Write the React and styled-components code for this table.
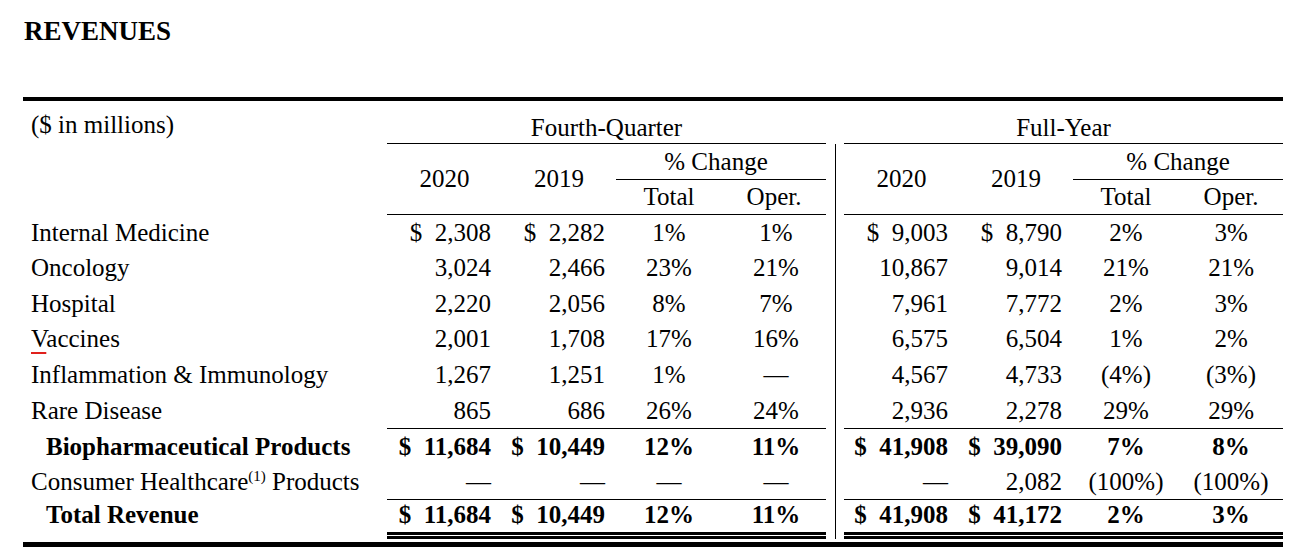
import React from "react";
import styled, { createGlobalStyle } from "styled-components";

const GlobalStyle = createGlobalStyle`
  body {
    margin: 0;
    background: #fff;
    color: #000;
    font-family: "Liberation Serif", "Times New Roman", serif;
  }
`;

const Page = styled.div`
  padding: 17px 29px 0 23px;
`;

const Title = styled.h1`
  margin: 0;
  padding-left: 1px;
  font-size: 27px;
  font-weight: 700;
  line-height: 29px;
`;

const Table = styled.table`
  margin-top: 51px;
  width: 1260px;
  table-layout: fixed;
  border-collapse: separate;
  border-spacing: 0;
  border-top: 4px solid #000;
  border-bottom: 5px solid #000;
  font-size: 25px;
  line-height: 28px;
`;

const Row = styled.tr`
  height: ${(p) => p.$h}px;
`;

const Label = styled.td`
  padding: 0 0 ${(p) => p.$pb || 0}px ${(p) => (p.$bold ? 23 : 8)}px;
  font-weight: ${(p) => (p.$bold ? 700 : 400)};
  vertical-align: ${(p) => p.$valign || "middle"};
  white-space: nowrap;
`;

const GroupHead = styled.th`
  padding: 0 0 1px;
  font-weight: 400;
  text-align: center;
  vertical-align: bottom;
  border-bottom: 1px solid #000;
`;

const Head = styled.th`
  padding: 0 ${(p) => p.$pr || 0}px 0 ${(p) => p.$pl || 0}px;
  font-weight: 400;
  text-align: center;
  vertical-align: middle;
  border-bottom: ${(p) => (p.$rule ? "1px solid #000" : "none")};
`;

const Cell = styled.td`
  padding: 0 ${(p) => (p.$money ? 11 : 0)}px ${(p) => p.$pb || 0}px
    ${(p) => p.$pl || 0}px;
  text-align: ${(p) => (p.$money ? "right" : "center")};
  font-weight: ${(p) => (p.$bold ? 700 : 400)};
  vertical-align: middle;
  white-space: pre;
  border-bottom: ${(p) => (p.$rule ? "1px solid #000" : "none")};
`;

const Gap = styled.td`
  padding: 0;
  background: ${(p) =>
    p.$line ? "linear-gradient(#000, #000) 9px 0 / 1px 100% no-repeat" : "none"};
`;

const DoubleRule = styled.td`
  padding: 0;
  border-top: 3px solid #000;
  border-bottom: 3px solid #000;
`;

const Sup = styled.sup`
  font-size: 15px;
  line-height: 0;
  vertical-align: 9px;
`;

const Squiggle = styled.span`
  text-decoration: underline 2px #e0201c;
  text-underline-offset: 5px;
`;

const rows = [
  { label: "Internal Medicine", h: 35, q: ["$  2,308", "$  2,282", "1%", "1%"], y: ["$  9,003", "$  8,790", "2%", "3%"] },
  { label: "Oncology", h: 36, q: ["3,024", "2,466", "23%", "21%"], y: ["10,867", "9,014", "21%", "21%"] },
  { label: "Hospital", h: 35, q: ["2,220", "2,056", "8%", "7%"], y: ["7,961", "7,772", "2%", "3%"] },
  { label: "Vaccines", h: 36, q: ["2,001", "1,708", "17%", "16%"], y: ["6,575", "6,504", "1%", "2%"] },
  { label: "Inflammation & Immunology", h: 36, q: ["1,267", "1,251", "1%", "—"], y: ["4,567", "4,733", "(4%)", "(3%)"] },
  { label: "Rare Disease", h: 36, rule: true, q: ["865", "686", "26%", "24%"], y: ["2,936", "2,278", "29%", "29%"] },
  { label: "Biopharmaceutical Products", h: 35, bold: true, q: ["$  11,684", "$  10,449", "12%", "11%"], y: ["$  41,908", "$  39,090", "7%", "8%"] },
  { label: "consumer", h: 36, rule: true, q: ["—", "—", "—", "—"], y: ["—", "2,082", "(100%)", "(100%)"] },
  { label: "Total Revenue", h: 32, bold: true, pb: 3, q: ["$  11,684", "$  10,449", "12%", "11%"], y: ["$  41,908", "$  41,172", "2%", "3%"] },
];

const renderLabel = (label) => {
  if (label === "consumer")
    return (
      <>
        Consumer Healthcare<Sup>(1)</Sup> Products
      </>
    );
  if (label === "Vaccines")
    return (
      <>
        <Squiggle>V</Squiggle>accines
      </>
    );
  return label;
};

const Group = ({ values, bold, rule, pb, operPad }) =>
  values.map((v, i) => (
    <Cell
      key={i}
      $money={i < 2}
      $pl={i === 3 ? operPad : 0}
      $pb={pb}
      $bold={bold}
      $rule={rule}
    >
      {v}
    </Cell>
  ));

export default function App() {
  return (
    <>
      <GlobalStyle />
      <Page>
        <Title>REVENUES</Title>
        <Table>
          <colgroup>
            <col style={{ width: 364 }} />
            <col style={{ width: 115 }} />
            <col style={{ width: 114 }} />
            <col style={{ width: 106 }} />
            <col style={{ width: 104 }} />
            <col style={{ width: 18 }} />
            <col style={{ width: 115 }} />
            <col style={{ width: 114 }} />
            <col style={{ width: 106 }} />
            <col style={{ width: 104 }} />
          </colgroup>
          <thead>
            <Row $h={43}>
              <Label $valign="bottom" $pb={5}>($ in millions)</Label>
              <GroupHead colSpan={4}>Fourth-Quarter</GroupHead>
              <Gap />
              <GroupHead colSpan={4}>Full-Year</GroupHead>
            </Row>
            <Row $h={36}>
              <Label />
              <Head rowSpan={2} $rule>2020</Head>
              <Head rowSpan={2} $rule>2019</Head>
              <Head colSpan={2} $rule $pr={10}>% Change</Head>
              <Gap $line />
              <Head rowSpan={2} $rule>2020</Head>
              <Head rowSpan={2} $rule>2019</Head>
              <Head colSpan={2} $rule>% Change</Head>
            </Row>
            <Row $h={35}>
              <Label />
              <Head $rule>Total</Head>
              <Head $rule>Oper.</Head>
              <Gap $line />
              <Head $rule>Total</Head>
              <Head $rule>Oper.</Head>
            </Row>
          </thead>
          <tbody>
            {rows.map((r) => (
              <Row key={r.label} $h={r.h}>
                <Label $bold={r.bold} $pb={r.pb}>{renderLabel(r.label)}</Label>
                <Group values={r.q} bold={r.bold} rule={r.rule} pb={r.pb} operPad={4} />
                <Gap $line />
                <Group values={r.y} bold={r.bold} rule={r.rule} pb={r.pb} operPad={0} />
              </Row>
            ))}
            <Row $h={7}>
              <Label />
              <DoubleRule colSpan={4} />
              <Gap $line />
              <DoubleRule colSpan={4} />
            </Row>
            <Row $h={3}>
              <Label />
              <Gap colSpan={9} />
            </Row>
          </tbody>
        </Table>
      </Page>
    </>
  );
}
